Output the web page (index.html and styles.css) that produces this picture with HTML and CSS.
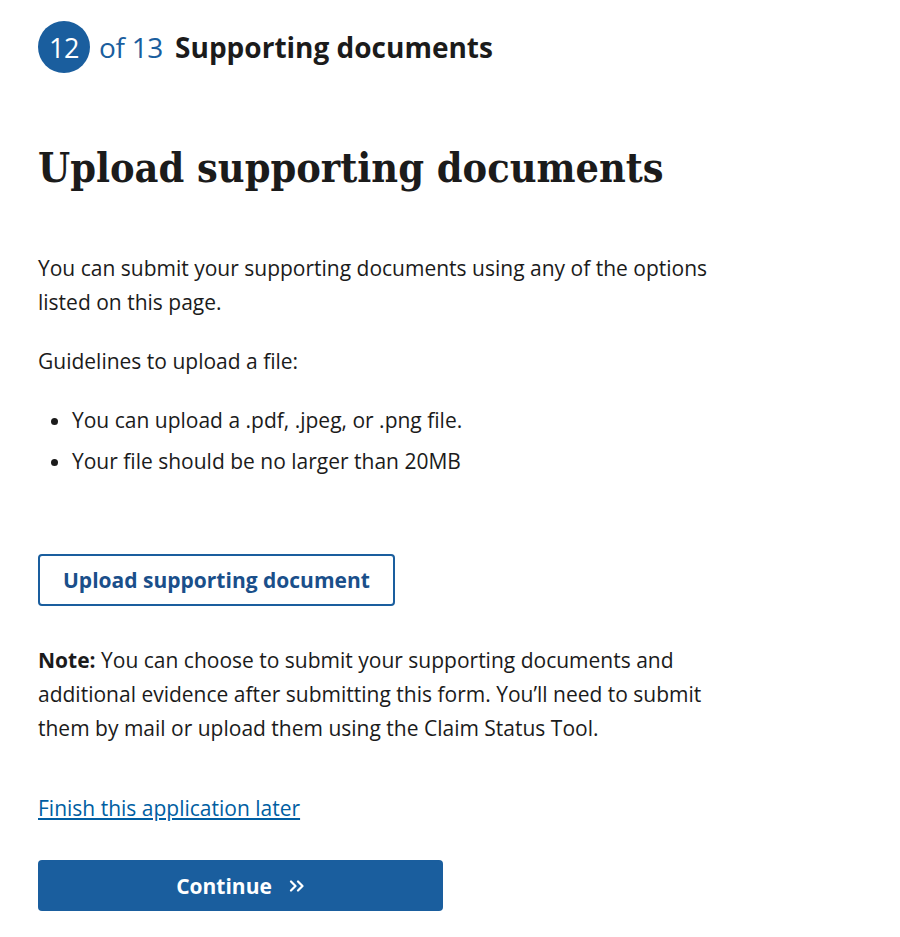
FILE: index.html
```html
<!DOCTYPE html>
<html lang="en">
<head>
<meta charset="utf-8">
<title>Upload supporting documents</title>
<link rel="stylesheet" href="styles.css">
</head>
<body>
<main class="page">
  <h2 class="step">
    <span class="step-num">12</span>
    <span class="step-of">of 13</span>
    <span class="step-title">Supporting documents</span>
  </h2>
  <h1 class="title">Upload supporting documents</h1>
  <p class="text">You can submit your supporting documents using any of the options listed on this page.</p>
  <p class="text guide">Guidelines to upload a file:</p>
  <ul class="list">
    <li>You can upload a .pdf, .jpeg, or .png file.</li>
    <li>Your file should be no larger than 20MB</li>
  </ul>
  <button class="btn-outline" type="button">Upload supporting document</button>
  <p class="text note"><strong>Note:</strong> You can choose to submit your supporting documents and additional evidence after submitting this form. You’ll need to submit them by mail or upload them using the Claim Status Tool.</p>
  <a class="later" href="#">Finish this application later</a>
  <button class="btn-primary" type="button"><span>Continue</span><svg class="chev" width="16" height="12" viewBox="0 0 16 12" aria-hidden="true"><path d="M2 1.5 L6.5 6 L2 10.5 M9 1.5 L13.5 6 L9 10.5" fill="none" stroke="#fff" stroke-width="2.2" stroke-linecap="round" stroke-linejoin="round"/></svg></button>
</main>
</body>
</html>
```
FILE: styles.css
```css
* { box-sizing: border-box; }
body {
  margin: 0;
  background: #fff;
  color: #1b1b1b;
  font-family: "Open Sans", "Noto Sans", sans-serif;
}
.page {
  padding: 21px 0 0 38px;
  width: 728px;
}
.step {
  display: flex;
  align-items: center;
  margin: 0;
  height: 52px;
  font-size: 28px;
  font-weight: 400;
}
.step-num {
  width: 52px;
  height: 52px;
  border-radius: 50%;
  background: #1a5e9e;
  color: #fff;
  display: flex;
  align-items: center;
  justify-content: center;
  font-size: 27px;
  letter-spacing: -0.5px;
}
.step-of {
  color: #1a5e9e;
  margin-left: 9px;
  letter-spacing: -0.3px;
}
.step-title {
  font-weight: 700;
  margin-left: 12px;
}
.title {
  font-family: "DejaVu Serif Condensed", "DejaVu Serif", serif;
  font-weight: 700;
  font-size: 41px;
  line-height: 48px;
  margin: 71px 0 0;
}
.text {
  font-size: 21px;
  line-height: 34px;
  margin: 0;
}
.title + .text { margin-top: 59px; }
.guide { margin-top: 25px; }
.list {
  margin: 25px 0 0;
  padding-left: 34px;
  font-size: 21px;
  line-height: 34px;
}
.list li + li { margin-top: 7px; }
.btn-outline {
  display: block;
  margin-top: 76px;
  height: 52px;
  padding: 0 23px;
  border: 2px solid #1a5e9e;
  border-radius: 4px;
  background: #fff;
  color: #1a4f8a;
  font-family: inherit;
  font-size: 21px;
  font-weight: 700;
}
.note { margin-top: 37px; }
.later {
  display: block;
  width: max-content;
  margin-top: 46px;
  font-size: 21px;
  line-height: 34px;
  color: #005ea2;
  text-decoration: underline;
}
.btn-primary {
  display: flex;
  align-items: center;
  justify-content: center;
  gap: 17px;
  margin-top: 35px;
  width: 405px;
  height: 51px;
  border: 0;
  border-radius: 4px;
  background: #1a5e9e;
  color: #fff;
  font-family: inherit;
  font-size: 21px;
  font-weight: 700;
}
.chev { display: block; }
```
